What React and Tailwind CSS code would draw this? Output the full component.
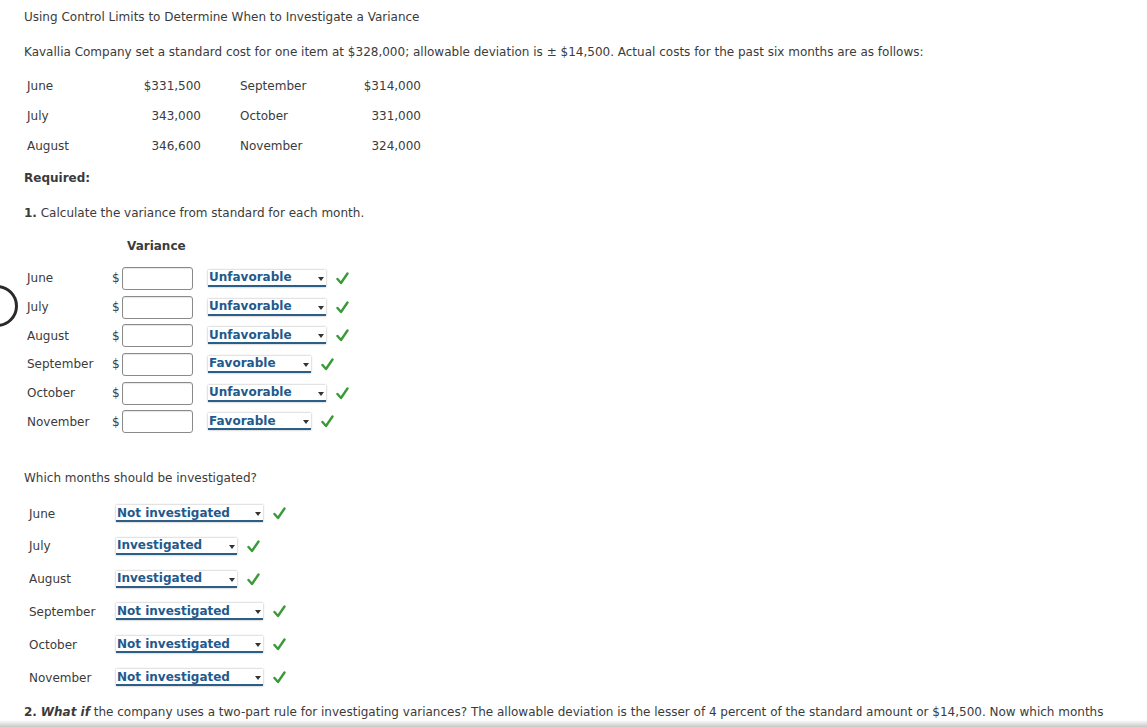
import React from "react";

const costs = [
  ["June", "$331,500", "September", "$314,000"],
  ["July", "343,000", "October", "331,000"],
  ["August", "346,600", "November", "324,000"],
];

const variances = [
  ["June", "Unfavorable"],
  ["July", "Unfavorable"],
  ["August", "Unfavorable"],
  ["September", "Favorable"],
  ["October", "Unfavorable"],
  ["November", "Favorable"],
];

const investigate = [
  ["June", "Not investigated"],
  ["July", "Investigated"],
  ["August", "Investigated"],
  ["September", "Not investigated"],
  ["October", "Not investigated"],
  ["November", "Not investigated"],
];

function Check() {
  return (
    <svg width="13" height="13" viewBox="0 0 13 13" className="shrink-0">
      <path d="M1.5 7 L5 11 L11.5 1.5" fill="none" stroke="#3a9a3a" strokeWidth="2.4" strokeLinecap="round" strokeLinejoin="round" />
    </svg>
  );
}

function Pick({ value, width }) {
  return (
    <div className="flex items-center gap-[10px]">
      <div
        className={`relative flex h-[17px] items-center border-b-2 border-[#2b5f88] bg-white shadow-[0_0_2px_rgba(0,0,0,0.35)] ${width}`}
      >
        <span className="pl-[1px] text-[12px] font-bold leading-none text-[#1f5a8c]">{value}</span>
        <span className="absolute right-[2px] top-[7px] h-0 w-0 border-x-[3px] border-t-[4px] border-x-transparent border-t-[#333]" />
      </div>
      <Check />
    </div>
  );
}

export default function App() {
  return (
    <div className="relative min-h-screen overflow-hidden bg-white font-['DejaVu_Sans',Verdana,sans-serif] text-[12px] text-[#3b3b3b]">
      <div className="w-[1110px] pl-[24px] pt-[10px]">
        <p className="leading-[15px]">Using Control Limits to Determine When to Investigate a Variance</p>
        <p className="mt-[20px] leading-[15px]">
          Kavallia Company set a standard cost for one item at $328,000; allowable deviation is ± $14,500. Actual costs for the past six months are as follows:
        </p>

        <div className="mt-[11px] ml-[3px] flex flex-col">
          {costs.map((r) => (
            <div key={r[0]} className="flex h-[30px] items-center">
              <span className="w-[90px]">{r[0]}</span>
              <span className="w-[84px] text-right">{r[1]}</span>
              <span className="ml-[39px] w-[100px]">{r[2]}</span>
              <span className="w-[81px] text-right">{r[3]}</span>
            </div>
          ))}
        </div>

        <p className="mt-[10px] font-bold leading-[15px]">Required:</p>
        <p className="mt-[20px] leading-[15px]">
          <b>1.</b> Calculate the variance from standard for each month.
        </p>

        <p className="mt-[18px] ml-[103px] font-bold leading-[15px]">Variance</p>

        <div className="mt-[10px] ml-[3px] flex flex-col">
          {variances.map(([m, v]) => (
            <div key={m} className="flex h-[28.7px] items-center">
              <span className="w-[85px]">{m}</span>
              <span className="w-[10px]">$</span>
              <div className="h-[23px] w-[71px] rounded-[3px] border border-[#8a8a8a] bg-white shadow-[inset_0_1px_1px_rgba(0,0,0,0.1)]" />
              <div className="ml-[15px]">
                <Pick value={v} width={v === "Favorable" ? "w-[103px]" : "w-[118px]"} />
              </div>
            </div>
          ))}
        </div>

        <p className="mt-[35px] leading-[15px]">Which months should be investigated?</p>

        <div className="mt-[11px] ml-[5px] flex flex-col">
          {investigate.map(([m, v]) => (
            <div key={m} className="flex h-[32.8px] items-center">
              <span className="w-[87px]">{m}</span>
              <Pick value={v} width={v === "Investigated" ? "w-[121px]" : "w-[147px]"} />
            </div>
          ))}
        </div>

        <p className="mt-[7px] leading-[22px]">
          <b>2.</b> <b><i>What if</i></b> the company uses a two-part rule for investigating variances? The allowable deviation is the lesser of 4 percent of the standard amount or $14,500. Now which months should be investigated?
        </p>
        <div className="h-[200px]" />
      </div>

      <div className="absolute left-[-24px] top-[285px] h-[42px] w-[42px] rounded-full border-[3px] border-[#2a2a2a]" />
      <div className="fixed bottom-0 left-0 h-[7px] w-full bg-gradient-to-b from-transparent to-[#c8c8c8]" />
    </div>
  );
}
